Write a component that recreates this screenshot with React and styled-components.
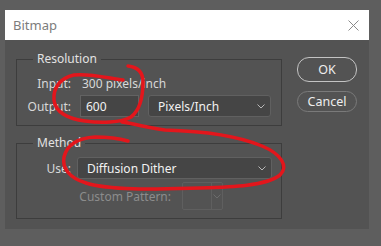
import React from 'react'
import styled, { createGlobalStyle } from 'styled-components'

const GlobalStyle = createGlobalStyle`
  html, body {
    margin: 0;
    padding: 0;
    background: #5e5e5e;
    font-family: 'Noto Sans', 'Open Sans', sans-serif;
  }
`

const Page = styled.div`
  position: relative;
  width: 381px;
  height: 246px;
  overflow: hidden;
  padding: 10px 0 0 5px;
  box-sizing: border-box;
`

const Dialog = styled.div`
  width: 364px;
  height: 219px;
  background: #535353;
`

const TitleBar = styled.div`
  height: 30px;
  background: #ffffff;
  display: flex;
  align-items: center;
  justify-content: space-between;
  padding: 0 10px 0 8px;
  box-sizing: border-box;
`

const Title = styled.span`
  font-size: 13px;
  color: #7c7c7c;
`

const Body = styled.div`
  display: flex;
  gap: 15px;
  padding: 11px 0 0 11px;
`

const Groups = styled.div`
  width: 266px;
  display: flex;
  flex-direction: column;
  gap: 9px;
`

const Group = styled.fieldset`
  margin: 0;
  border: 1px solid #3d3d3d;
  padding: ${p => p.$pad};
  min-width: 0;
`

const Legend = styled.legend`
  margin-left: 16px;
  padding: 0 4px;
  font-size: 12px;
  line-height: 16px;
  color: #e2e2e2;
`

const Row = styled.div`
  display: flex;
  align-items: center;
  height: ${p => p.$h}px;
  margin-top: ${p => p.$mt || 0}px;
`

const Label = styled.span`
  width: ${p => p.$w}px;
  text-align: right;
  font-size: 12px;
  color: ${p => (p.$disabled ? '#8c8c8c' : '#d8d8d8')};
  margin-right: ${p => p.$gap}px;
  white-space: nowrap;
`

const Value = styled.span`
  font-size: 12px;
  color: #d8d8d8;
`

const TextField = styled.div`
  width: 59px;
  height: 22px;
  box-sizing: border-box;
  background: #454545;
  border: 1px solid #626262;
  display: flex;
  align-items: center;
  padding-left: 5px;
  font-size: 12px;
  color: #f2f2f2;
`

const Select = styled.div`
  width: ${p => p.$w}px;
  height: 22px;
  box-sizing: border-box;
  background: #454545;
  border: 1px solid #606060;
  border-radius: 3px;
  display: flex;
  align-items: center;
  justify-content: space-between;
  padding: 0 5px 0 9px;
  margin-left: ${p => p.$ml || 0}px;
  font-size: 12px;
  color: #f2f2f2;
`

const MiniSelect = styled.div`
  width: 41px;
  height: 28px;
  box-sizing: border-box;
  border: 1px solid #5f5f5f;
  border-radius: 2px;
  display: flex;
  margin-left: 11px;
`

const MiniField = styled.div`
  flex: 1;
  border-right: 1px solid #5f5f5f;
`

const MiniArrow = styled.div`
  width: 10px;
  display: flex;
  align-items: center;
  justify-content: center;
`

const Buttons = styled.div`
  display: flex;
  flex-direction: column;
  gap: 9px;
  padding-top: 6px;
`

const Button = styled.div`
  width: 60px;
  height: ${p => p.$h}px;
  box-sizing: border-box;
  border: ${p => (p.$primary ? '1.5px solid #c4c4c4' : '1px solid #7a7a7a')};
  border-radius: 12px;
  display: flex;
  align-items: center;
  justify-content: center;
  font-size: 12.5px;
  color: #eeeeee;
`

const Scribble = styled.svg`
  position: absolute;
  top: 0;
  left: 0;
  pointer-events: none;
`

const Chevron = ({ color = '#b8b8b8' }) => (
  <svg width="8" height="5" viewBox="0 0 8 5">
    <path d="M0.5 0.5 L4 4 L7.5 0.5" fill="none" stroke={color} strokeWidth="1" />
  </svg>
)

const CloseIcon = () => (
  <svg width="11" height="11" viewBox="0 0 11 11">
    <path d="M0.5 0.5 L10.5 10.5 M10.5 0.5 L0.5 10.5" stroke="#8a8a8a" strokeWidth="1" />
  </svg>
)

export default function App() {
  return (
    <Page>
      <GlobalStyle />
      <Dialog>
        <TitleBar>
          <Title>Bitmap</Title>
          <CloseIcon />
        </TitleBar>
        <Body>
          <Groups>
            <Group $pad="7px 0 8px 0">
              <Legend>Resolution</Legend>
              <Row $h={18}>
                <Label $w={54} $gap={11}>Input:</Label>
                <Value>300 pixels/inch</Value>
              </Row>
              <Row $h={22} $mt={3}>
                <Label $w={54} $gap={9}>Output:</Label>
                <TextField>600</TextField>
                <Select $w={123} $ml={9}>
                  Pixels/Inch
                  <Chevron />
                </Select>
              </Row>
            </Group>
            <Group $pad="6px 0 8px 0">
              <Legend>Method</Legend>
              <Row $h={22}>
                <Label $w={54} $gap={6}>Use:</Label>
                <Select $w={195}>
                  Diffusion Dither
                  <Chevron />
                </Select>
              </Row>
              <Row $h={28} $mt={3}>
                <Label $w={154} $gap={0} $disabled>Custom Pattern:</Label>
                <MiniSelect>
                  <MiniField />
                  <MiniArrow>
                    <Chevron color="#6c6c6c" />
                  </MiniArrow>
                </MiniSelect>
              </Row>
            </Group>
          </Groups>
          <Buttons>
            <Button $primary $h={25}>OK</Button>
            <Button $h={21}>Cancel</Button>
          </Buttons>
        </Body>
      </Dialog>
      <Scribble width="381" height="246" viewBox="0 0 381 246">
        <g fill="none" stroke="#e3161c" strokeWidth="3.5" strokeLinecap="round" strokeLinejoin="round">
          <path d="M128 66 C137 67 143 72 143 82 C143 97 140 110 131 117 C121 123 100 123 85 121 C68 119 55 112 54 100 C53 88 60 78 74 75 C88 73 108 78 123 80" />
          <path d="M122 122 C136 124 148 128 165 130 C200 131 238 136 262 146 C281 154 289 166 280 175 C266 186 232 187 200 188 C160 189 112 191 86 183 C69 178 62 168 64 157 C67 145 78 138 95 137 C110 137 121 139 128 141" />
        </g>
      </Scribble>
    </Page>
  )
}
